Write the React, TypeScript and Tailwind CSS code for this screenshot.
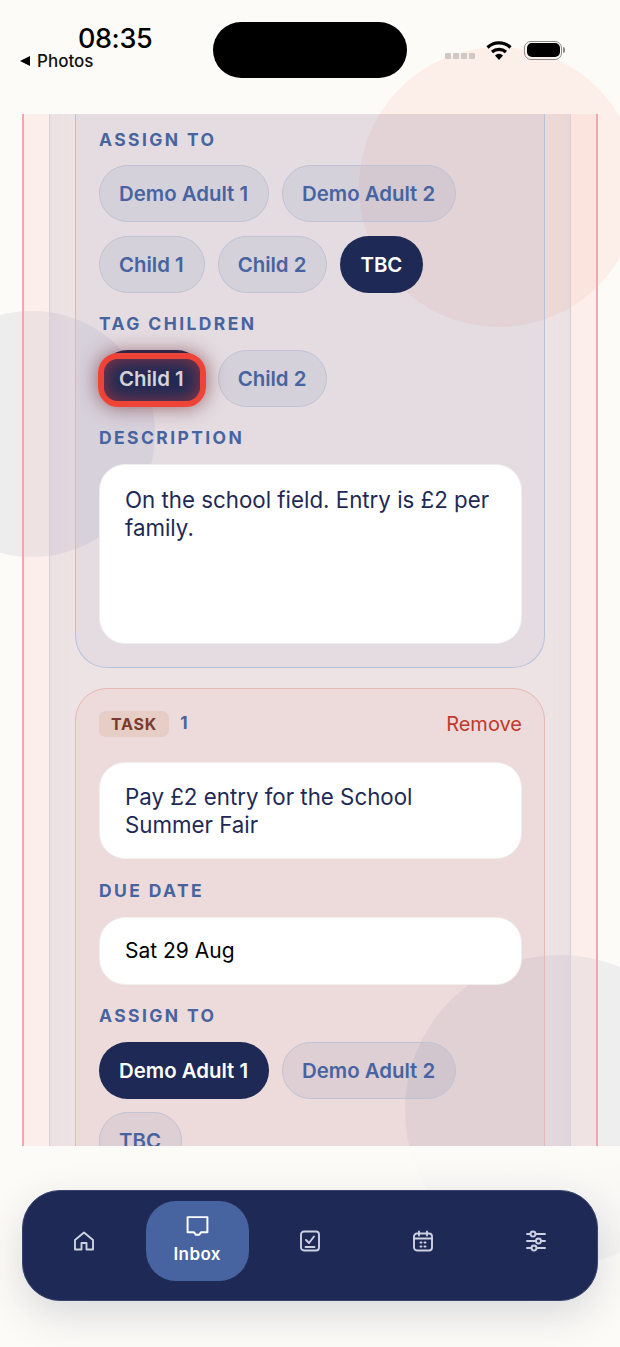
import React from "react";

function Label({ children }: { children: React.ReactNode }) {
  return (
    <div className="text-[17.5px] leading-[22px] font-bold tracking-[2.4px] text-[#4764a0]">
      {children}
    </div>
  );
}

function Pill({ children, active }: { children: React.ReactNode; active?: boolean }) {
  return (
    <button
      className={`h-[57px] rounded-full pt-px text-[20.4px] font-semibold ${
        active
          ? "bg-[#1e2a55] pr-[21px] pl-[20px] text-white"
          : "border border-[#c0c3d4] bg-[rgba(71,100,160,0.09)] pr-[20px] pl-[19px] text-[#4764a0]"
      }`}
    >
      {children}
    </button>
  );
}

function TappedPill({ children }: { children: React.ReactNode }) {
  return (
    <button className="relative h-[57px] rounded-full bg-[#1e2a55] pt-px pr-[21px] pl-[20px] text-[20.4px] font-semibold text-[#d8d6dc]">
      {children}
      <span className="absolute top-[3px] -right-px -left-px h-[54px] rounded-[20px] border-[6px] border-[#ee4438] shadow-[0_0_20px_rgba(100,30,40,0.65),inset_0_0_20px_rgba(238,68,56,0.55)]" />
    </button>
  );
}

function Field({ children, className }: { children: React.ReactNode; className: string }) {
  return (
    <div className={`rounded-[26px] border border-[#f1eeee] bg-white px-[25px] leading-[28px] ${className}`}>
      {children}
    </div>
  );
}

function NavIcon({ children, className }: { children: React.ReactNode; className: string }) {
  return (
    <svg
      viewBox="0 0 24 24"
      fill="none"
      stroke="currentColor"
      strokeWidth={1.9}
      strokeLinecap="round"
      strokeLinejoin="round"
      className={className}
    >
      {children}
    </svg>
  );
}

export default function App() {
  return (
    <div className="relative flex h-[1347px] w-[620px] flex-col overflow-hidden bg-[#fdfbf7] font-['Inter',sans-serif] text-[#1e2a55]">
      {/* background blobs */}
      <div className="absolute top-[47px] left-[359px] h-[280px] w-[280px] rounded-full bg-[#fcefe9]" />
      <div className="absolute top-[311px] left-[-91px] h-[246px] w-[246px] rounded-full bg-[#eeedee]" />
      <div className="absolute top-[955px] left-[405px] h-[310px] w-[310px] rounded-full bg-[#efeeef]" />

      {/* status bar */}
      <div className="relative flex h-[114px] shrink-0 items-start pt-[22px]">
        <div className="flex w-[213px] flex-col pt-px">
          <div className="pl-[78px] text-[27px] leading-[32px] font-medium tracking-[-0.4px] text-black">08:35</div>
          <div className="-mt-[4px] flex items-center gap-[7px] pl-[20px] text-[17px] leading-[20px] font-medium text-[#111]">
            <span className="h-0 w-0 border-y-[5.5px] border-r-[10px] border-y-transparent border-r-black" />
            Photos
          </div>
        </div>
        <div className="h-[56px] w-[194px] rounded-full bg-black" />
        <div className="flex items-center pt-[18px] pl-[38px]">
          <div className="mt-[12px] flex gap-[2px]">
            <span className="h-[6px] w-[6px] rounded-[1px] bg-[#cfc8c4]" />
            <span className="h-[6px] w-[6px] rounded-[1px] bg-[#cfc8c4]" />
            <span className="h-[6px] w-[6px] rounded-[1px] bg-[#cfc8c4]" />
            <span className="h-[6px] w-[6px] rounded-[1px] bg-[#cfc8c4]" />
          </div>
          <svg viewBox="0 0 26 20" className="ml-[11px] h-[20px] w-[26px]">
            <path d="M1.5 7.5a16.5 16.5 0 0 1 23 0" fill="none" stroke="black" strokeWidth="3.2" />
            <path d="M6 12a10.5 10.5 0 0 1 14 0" fill="none" stroke="black" strokeWidth="3.2" />
            <path d="M9 15.4a5.5 5.5 0 0 1 8 0L13 20z" fill="black" />
          </svg>
          <div className="ml-[12px] flex items-center">
            <div className="flex h-[19px] w-[38px] rounded-[7px] border border-[#8a8a8a] p-[1.5px]">
              <div className="flex-1 rounded-[5px] bg-black" />
            </div>
            <div className="ml-px h-[6px] w-[2px] rounded-r-sm bg-[#8a8a8a]" />
          </div>
        </div>
      </div>

      {/* scrolled content */}
      <div className="relative mx-[22px] h-[1032px] shrink-0 overflow-hidden">
        <div className="-mt-[40px] border-x-2 border-[#f0a8b0] bg-[rgba(240,90,80,0.07)] px-[25px] pb-[40px]">
          <div className="border-x border-[#d6d1d8] bg-[rgba(71,90,150,0.08)] px-[25px] shadow-[inset_0_0_24px_rgba(110,110,150,0.05)]">
            <div className="flex flex-col rounded-b-[32px] border-x border-b border-[#b4c3dc] bg-[rgba(71,120,190,0.06)] pt-[55px] pr-[22px] pb-[23px] pl-[23px]">
              <Label>ASSIGN TO</Label>
              <div className="mt-[14px] flex flex-wrap gap-x-[13px] gap-y-[14px]">
                <Pill>Demo Adult 1</Pill>
                <Pill>Demo Adult 2</Pill>
                <Pill>Child 1</Pill>
                <Pill>Child 2</Pill>
                <Pill active>TBC</Pill>
              </div>
              <div className="mt-[20px]">
                <Label>TAG CHILDREN</Label>
              </div>
              <div className="mt-[15px] flex gap-[13px]">
                <TappedPill>Child 1</TappedPill>
                <Pill>Child 2</Pill>
              </div>
              <div className="mt-[20px]">
                <Label>DESCRIPTION</Label>
              </div>
              <Field className="mt-[15px] h-[180px] pt-[21px] text-[22.3px]">On the school field. Entry is £2 per family.</Field>
            </div>

            <div className="mt-[20px] flex flex-col rounded-[32px] border border-[#e6b8b0] bg-[rgba(220,90,70,0.06)] pt-[22px] pr-[22px] pb-[60px] pl-[23px]">
              <div className="flex h-[26px] items-center">
                <span className="rounded-[7px] bg-[#e6cdc6] px-[12px] py-[2px] text-[16px] leading-[22px] font-bold tracking-[0.8px] text-[#7a3b2e]">
                  TASK
                </span>
                <span className="ml-[11px] text-[17px] font-bold text-[#4764a0]">1</span>
                <span className="ml-auto text-[20px] text-[#c0392b]">Remove</span>
              </div>
              <Field className="mt-[25px] h-[97px] pt-[20px] text-[22.3px]">Pay £2 entry for the School Summer Fair</Field>
              <div className="mt-[21px]">
                <Label>DUE DATE</Label>
              </div>
              <Field className="mt-[15px] flex h-[68px] items-center text-[21px] text-black">Sat 29 Aug</Field>
              <div className="mt-[20px]">
                <Label>ASSIGN TO</Label>
              </div>
              <div className="mt-[15px] flex flex-wrap gap-x-[13px] gap-y-[13px]">
                <Pill active>Demo Adult 1</Pill>
                <Pill>Demo Adult 2</Pill>
                <Pill>TBC</Pill>
              </div>
            </div>
          </div>
        </div>
      </div>

      {/* bottom nav */}
      <div className="relative flex-1 bg-gradient-to-b from-[#fdfbf7] to-[rgba(253,251,247,0)] px-[22px] pt-[44px]">
        <nav className="grid h-[111px] grid-cols-5 rounded-[38px] border border-[#39456e] bg-[#1e2a55] px-[5px] pt-[10px] pb-[19px] text-[#cdd2e2] shadow-[0_14px_40px_rgba(30,42,85,0.16)]">
          <div className="flex items-center justify-center">
            <NavIcon className="h-[24px] w-[24px]">
              <path d="M3 11 12 3.5 21 11v9.5h-6.5V14h-5v6.5H3z" />
            </NavIcon>
          </div>
          <div className="mx-[5px] flex flex-col items-center rounded-[30px] bg-[#4764a0] pt-[13px] text-white">
            <NavIcon className="h-[25px] w-[25px]">
              <path d="M2.5 3h19v14.5h-6L13.5 20h-3l-2-2.5h-6z" />
            </NavIcon>
            <span className="mt-[3px] text-[17px] leading-[24px] font-semibold tracking-[0.4px]">Inbox</span>
          </div>
          <div className="flex items-center justify-center">
            <NavIcon className="h-[24px] w-[24px]">
              <rect x="3" y="2.5" width="18" height="19" rx="3" />
              <path d="m8 11 3 3 5-6.5" />
              <path d="M7.5 18h9" />
            </NavIcon>
          </div>
          <div className="flex items-center justify-center">
            <NavIcon className="h-[24px] w-[24px]">
              <rect x="3" y="4.5" width="18" height="17" rx="3" />
              <path d="M8 2.5v4M16 2.5v4M3 9.5h18" />
              <path d="M9.5 13.5h1M13.5 13.5h1M9.5 17.5h1M13.5 17.5h1" />
            </NavIcon>
          </div>
          <div className="flex items-center justify-center">
            <NavIcon className="h-[24px] w-[24px]">
              <path d="M3 5h3.5M11.5 5H21M3 12h9M17 12h4M3 19h4.5M12.5 19H21" />
              <circle cx="9" cy="5" r="2.5" />
              <circle cx="14.5" cy="12" r="2.5" />
              <circle cx="10" cy="19" r="2.5" />
            </NavIcon>
          </div>
        </nav>
      </div>
    </div>
  );
}
